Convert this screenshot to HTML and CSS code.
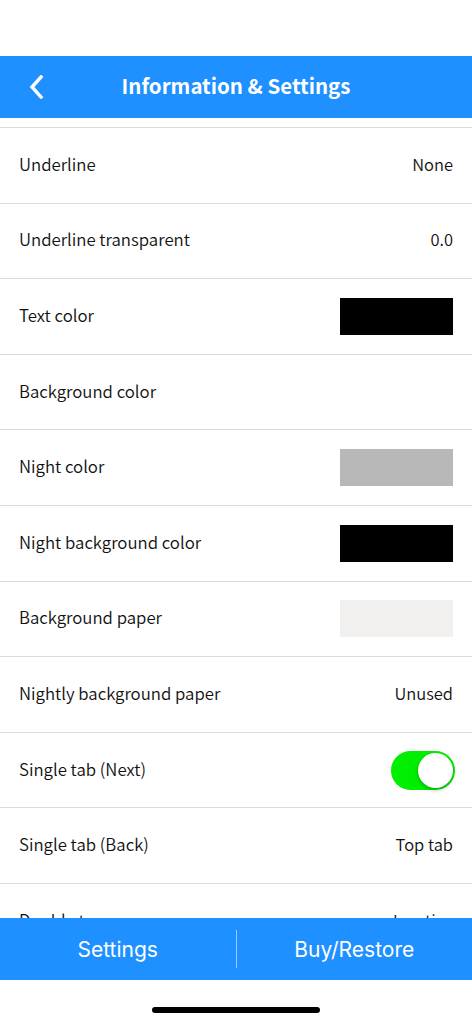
FILE: index.html
```html
<!DOCTYPE html>
<html lang="en">
<head>
    <meta charset="UTF-8">
    <meta name="viewport" content="width=device-width, initial-scale=1.0">
    <title>Information &amp; Settings</title>
    <link rel="stylesheet" href="styles.css">
</head>
<body>
    <div class="phone">
        <div class="statusbar"></div>
        <div class="header">
            <span class="back">
                <svg width="18" height="24" viewBox="0 0 18 24">
                    <path d="M13 2 L4 12 L13 22" fill="none" stroke="#fff" stroke-width="3.4" stroke-linecap="square"/>
                </svg>
            </span>
            <h1>Information &amp; Settings</h1>
        </div>
        <div class="list">
            <div class="topline"></div>
            <div class="row"><span>Underline</span><span class="val">None</span></div>
            <div class="row"><span>Underline transparent</span><span class="val">0.0</span></div>
            <div class="row"><span>Text color</span><span class="swatch black"></span></div>
            <div class="row"><span>Background color</span></div>
            <div class="row"><span>Night color</span><span class="swatch gray"></span></div>
            <div class="row"><span>Night background color</span><span class="swatch black"></span></div>
            <div class="row"><span>Background paper</span><span class="swatch paper"></span></div>
            <div class="row"><span>Nightly background paper</span><span class="val">Unused</span></div>
            <div class="row"><span>Single tab (Next)</span><span class="toggle"><i></i></span></div>
            <div class="row"><span>Single tab (Back)</span><span class="val">Top tab</span></div>
            <div class="row"><span>Double tap</span><span class="val">Inactive</span></div>
        </div>
        <div class="tabbar">
            <div class="tab">Settings</div>
            <div class="sep"></div>
            <div class="tab">Buy/Restore</div>
        </div>
        <div class="homebar"><span></span></div>
    </div>
</body>
</html>
```

FILE: styles.css
```css
body {
    margin: 0;
    background: #ffffff;
}
.phone {
    width: 472px;
    height: 1024px;
    display: flex;
    flex-direction: column;
    font-family: "Noto Sans CJK KR", "Noto Sans", sans-serif;
    color: #111111;
}
.statusbar {
    height: 56px;
}
.header {
    height: 62px;
    background: #1e90ff;
    display: flex;
    align-items: center;
    justify-content: center;
    position: relative;
}
.header h1 {
    margin: 0 0 4px 0;
    color: #ffffff;
    font-size: 20.5px;
    font-weight: 700;
}
.back {
    position: absolute;
    left: 28px;
    top: 19px;
    height: 24px;
}
.list {
    height: 800px;
    overflow: hidden;
    padding-top: 9px;
    box-sizing: border-box;
}
.topline {
    border-bottom: 1px solid #dadada;
}
.row {
    height: 75.6px;
    box-sizing: border-box;
    border-bottom: 1px solid #dadada;
    display: flex;
    align-items: center;
    justify-content: space-between;
    padding: 0 19px 3px 19px;
    font-size: 16.8px;
    font-weight: 350;
}
.val {
    font-size: 16.5px;
}
.swatch {
    width: 113px;
    height: 37px;
    margin-top: 3px;
}
.black {
    background: #000000;
}
.gray {
    background: #b8b8b8;
}
.paper {
    background: #f2f0ee;
}
.toggle {
    width: 64px;
    height: 39px;
    border-radius: 20px;
    background: #00ee00;
    position: relative;
    margin-right: -2px;
    margin-top: 3px;
}
.toggle i {
    position: absolute;
    right: 2px;
    top: 2px;
    width: 35px;
    height: 35px;
    border-radius: 50%;
    background: #ffffff;
    box-shadow: 0 2px 4px rgba(0, 0, 0, 0.25);
}
.tabbar {
    height: 62px;
    background: #1e90ff;
    display: flex;
    align-items: center;
}
.tab {
    flex: 1;
    text-align: center;
    color: #ffffff;
    font-family: Inter, "Liberation Sans", sans-serif;
    font-size: 21px;
}
.sep {
    width: 1px;
    height: 38px;
    background: rgba(255, 255, 255, 0.55);
}
.homebar {
    flex: 1;
    display: flex;
    justify-content: center;
    align-items: flex-start;
}
.homebar span {
    margin-top: 27px;
    width: 168px;
    height: 6px;
    border-radius: 3px;
    background: #000000;
}
```
